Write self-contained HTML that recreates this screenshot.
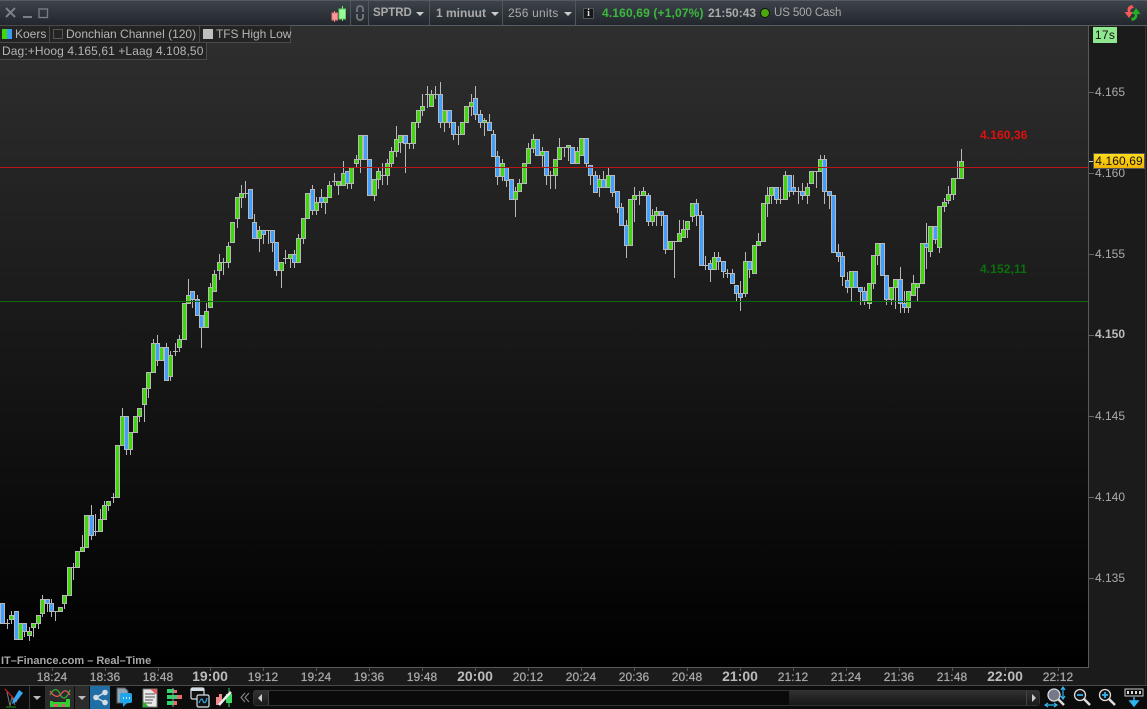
<!DOCTYPE html>
<html><head><meta charset="utf-8"><title>SPTRD</title>
<style>
html,body{margin:0;padding:0;background:#000}
#r{position:relative;width:1147px;height:709px;overflow:hidden;background:#1b1b1b;font-family:"Liberation Sans",sans-serif;color:#aaa;font-size:12px}
#r div,#r span,#r svg{position:absolute}
.t{white-space:nowrap;line-height:14px}
.l{background:#242424;border:1px solid #4a4a4a;box-sizing:border-box;height:18px}
.s{width:1px;top:1px;height:24px;background:#50565c}
.a{width:0;height:0;border-left:4px solid transparent;border-right:4px solid transparent;border-top:4px solid #ccc}
.y{left:1095px;color:#aaa;font-size:12px}
.k{left:1089px;width:5px;height:1px;background:#666}
.x{top:670px;width:60px;text-align:center;color:#aaa;font-size:12px;letter-spacing:.1px;text-shadow:0 0 .6px #aaa}
.m{top:668px;width:1px;height:3px;background:#555}
.b{font-size:14px!important;font-weight:bold;color:#bbb!important;top:669px!important;letter-spacing:0!important;text-shadow:none}
</style></head><body><div id="r">

<!-- top bar -->
<div style="left:0;top:0;width:1147px;height:25px;background:linear-gradient(#3d434a,#22272d);border-top:1px solid #565b61;box-sizing:border-box"></div>
<div style="left:0;top:25px;width:1147px;height:1px;background:#5a5e62"></div>
<svg style="left:0;top:0" width="60" height="25"><path d="M6 8L15 17M15 8L6 17" stroke="#7b8086" stroke-width="2"/><rect x="23" y="16" width="9" height="2" fill="#7b8086"/><rect x="39" y="9" width="8.500" height="8.500" fill="none" stroke="#7b8086" stroke-width="1.300"/></svg>
<svg style="left:328px;top:3px" width="22" height="20"><path d="M6.500 8V19" stroke="#f88"/><rect x="4" y="10" width="5.500" height="7" fill="#f99" stroke="#d77"/><path d="M14.500 3V18" stroke="#6f6"/><rect x="11" y="6" width="6.500" height="10" fill="#9f9" stroke="#6c6"/></svg>
<div class="s" style="left:350px"></div>
<svg style="left:354px;top:4px" width="12" height="18"><path d="M2 8V5a4 4 0 0 1 8 0V8h-2V5a2 2 0 0 0-4 0V8zM2 10v3a4 4 0 0 0 8 0V10h-2v3a2 2 0 0 1-4 0V10z" fill="#6e7378"/></svg>
<div class="s" style="left:368px"></div>
<span class="t" style="left:373px;top:6px;font-weight:bold;font-size:11.500px;letter-spacing:-.05px">SPTRD</span>
<div class="a" style="left:416px;top:12px"></div>
<div class="s" style="left:429px"></div>
<span class="t" style="left:436px;top:6px;font-weight:bold">1 minuut</span>
<div class="a" style="left:491px;top:12px"></div>
<div class="s" style="left:502px"></div>
<span class="t" style="left:508px;top:6px;letter-spacing:.2px">256 units</span>
<div class="a" style="left:564px;top:12px"></div>
<div class="s" style="left:575px"></div>
<div style="left:583px;top:8px;width:11px;height:11px;background:#15181b;border:1px solid #555;box-sizing:border-box;color:#ddd;font:bold 10px/9px 'Liberation Serif',serif;text-align:center">i</div>
<span class="t" style="left:602px;top:6px;font-weight:bold;color:#3cb83c;letter-spacing:.15px">4.160,69 (+1,07%)</span>
<span class="t" style="left:708px;top:6px;font-weight:bold">21:50:43</span>
<div style="left:760px;top:8px;width:10px;height:10px;border-radius:50%;background:#4aa80c;border:1px solid #111;box-sizing:border-box"></div>
<span class="t" style="left:774px;top:6px;font-size:11.500px;letter-spacing:-.1px">US 500 Cash</span>
<svg style="left:1122px;top:3px" width="22" height="20"><path d="M10 2C5 3 5 7 6 9H2.500L7 15L11 9H8.500C8 7 9 5 12 5z" fill="#f05a5a"/><path d="M10 18C15 17 16 13 15 11H18.500L14 5L10 11H12.500C13 13 12 15 9 15z" fill="#1fb31f"/></svg>

<!-- chart bg -->
<div style="left:0;top:26px;width:1088px;height:641px;background:linear-gradient(#2f2f2f,#000)"></div>
<svg id="c" style="left:0;top:26px" width="1088" height="641" viewBox="0 26 1088 641"></svg>
<div style="left:0;top:167px;width:1088px;height:1px;background:#bb1515"></div>
<div style="left:0;top:301px;width:1088px;height:1px;background:#0e6a0e"></div>

<!-- legend -->
<div class="l" style="left:-1px;top:25px;width:51px"></div>
<div style="left:2px;top:29px;width:5px;height:10px;background:#3fd80a"></div><div style="left:7px;top:29px;width:5px;height:10px;background:#3a9cf5"></div>
<span class="t" style="left:15px;top:27px;color:#b5b5b5">Koers</span>
<div class="l" style="left:49px;top:25px;width:151px"></div>
<div style="left:53px;top:29px;width:10px;height:10px;border:1px solid #555;box-sizing:border-box"></div>
<span class="t" style="left:66px;top:27px;color:#b5b5b5">Donchian Channel (120)</span>
<div class="l" style="left:199px;top:25px;width:92px"></div>
<div style="left:203px;top:29px;width:10px;height:10px;background:#c0c0c0"></div>
<span class="t" style="left:216px;top:27px;letter-spacing:-.05px;color:#b5b5b5">TFS High Low</span>
<div class="l" style="left:-1px;top:42px;width:208px"></div>
<span class="t" style="left:2px;top:44px;letter-spacing:.1px;color:#b5b5b5">Dag:+Hoog 4.165,61 +Laag 4.108,50</span>

<span class="t" style="left:980px;top:128px;color:#e01010;font-weight:bold;letter-spacing:.1px">4.160,36</span>
<span class="t" style="left:980px;top:262px;color:#0b700b;font-weight:bold;letter-spacing:.1px">4.152,11</span>
<span class="t" style="left:1px;top:654px;font-weight:bold;font-size:11px;color:#a8a8a8">IT–Finance.com – Real–Time</span>

<!-- right axis -->
<div style="left:1088px;top:26px;width:1px;height:642px;background:#5a5a5a"></div>
<div style="left:1145px;top:26px;width:1px;height:659px;background:#333"></div>
<div style="left:1093px;top:27px;width:24px;height:16px;background:#8fe88f;color:#111;font-size:12px;line-height:16px;text-align:center;letter-spacing:.3px">17s</div>
<div class="k" style="top:92px"></div><span class="t y" style="top:85px">4.165</span>
<div class="k" style="top:173px"></div><span class="t y" style="top:166px">4.160</span>
<div class="k" style="top:254px"></div><span class="t y" style="top:247px">4.155</span>
<div class="k" style="top:335px"></div><span class="t y" style="top:327px;font-weight:bold;color:#bbb">4.150</span>
<div class="k" style="top:416px"></div><span class="t y" style="top:409px">4.145</span>
<div class="k" style="top:497px"></div><span class="t y" style="top:490px">4.140</span>
<div class="k" style="top:578px"></div><span class="t y" style="top:571px">4.135</span>
<div style="left:1089px;top:161px;width:5px;height:1px;background:#ccc"></div>
<div style="left:1093px;top:153px;width:52px;height:16px;background:linear-gradient(#ffdc1e,#f0b400);border:1px solid #555;box-sizing:border-box;color:#111;line-height:14px;text-align:center;letter-spacing:.1px">4.160,69</div>

<!-- time axis -->
<div style="left:0;top:667px;width:1089px;height:1px;background:#5a5a5a"></div>
<div id="tm">
<span class="t x" style="left:22px">18:24</span><span class="t x" style="left:75px">18:36</span><span class="t x" style="left:128px">18:48</span><span class="t x b" style="left:180px">19:00</span><span class="t x" style="left:233px">19:12</span><span class="t x" style="left:286px">19:24</span><span class="t x" style="left:339px">19:36</span><span class="t x" style="left:392px">19:48</span><span class="t x b" style="left:445px">20:00</span><span class="t x" style="left:498px">20:12</span><span class="t x" style="left:551px">20:24</span><span class="t x" style="left:604px">20:36</span><span class="t x" style="left:657px">20:48</span><span class="t x b" style="left:710px">21:00</span><span class="t x" style="left:763px">21:12</span><span class="t x" style="left:816px">21:24</span><span class="t x" style="left:869px">21:36</span><span class="t x" style="left:922px">21:48</span><span class="t x b" style="left:975px">22:00</span><span class="t x" style="left:1028px">22:12</span>
<div class="m" style="left:52px"></div><div class="m" style="left:105px"></div><div class="m" style="left:158px"></div><div class="m" style="left:210px"></div><div class="m" style="left:263px"></div><div class="m" style="left:316px"></div><div class="m" style="left:369px"></div><div class="m" style="left:422px"></div><div class="m" style="left:475px"></div><div class="m" style="left:528px"></div><div class="m" style="left:581px"></div><div class="m" style="left:634px"></div><div class="m" style="left:687px"></div><div class="m" style="left:740px"></div><div class="m" style="left:793px"></div><div class="m" style="left:846px"></div><div class="m" style="left:899px"></div><div class="m" style="left:952px"></div><div class="m" style="left:1005px"></div><div class="m" style="left:1058px"></div>
</div>

<!-- bottom toolbar -->
<div style="left:0;top:685px;width:1147px;height:24px;background:#0c0c0c;border-top:1px solid #4a4a4a;box-sizing:border-box"></div>
<div style="left:29px;top:686px;width:1px;height:23px;background:#3a3a3a"></div>
<div class="a" style="left:33px;top:696px;border-top-color:#bbb"></div>
<div style="left:45px;top:686px;width:29px;height:23px;background:#2c2c2c"></div>
<div style="left:75px;top:686px;width:14px;height:23px;background:#2c2c2c"></div>
<div class="a" style="left:78px;top:696px;border-top-color:#bbb"></div>
<div style="left:90px;top:686px;width:20px;height:23px;background:#1f6ea6"></div>
<svg style="left:0;top:686px" width="250" height="23">
<path d="M7 6L10 20M10 20L12 11L15 19" stroke="#777" fill="none"/><path d="M5 3L17 16" stroke="#e02020" stroke-width="1.100"/><path d="M19 4L23 7L16 16L12 18L13 14z" fill="#3aa8f0"/><path d="M6 21H16" stroke="#1d9a1d"/>
<path d="M50 9C54 1 58 3 60 8S66 15 70 4" stroke="#2fae2f" stroke-width="1.300" fill="none"/><path d="M50 5C54 11 58 12 61 8S66 3 70 9" stroke="#e05a5a" stroke-width="1.300" fill="none"/><path d="M50 16h20v5H50z" fill="#2fd02f"/><path d="M54 18h4v3h-4zM62 18h3v3h-3z" fill="#e05a6a"/><path d="M50 15h3v2h-3zM66 13h4v3h-4z" fill="#2fd02f"/>
<circle cx="96" cy="11.500" r="2.800" fill="#d5dde3"/><circle cx="105" cy="6.500" r="2.800" fill="#d5dde3"/><circle cx="105" cy="16.500" r="2.800" fill="#d5dde3"/><path d="M96 11.500L105 6.500M96 11.500L105 16.500" stroke="#d5dde3" stroke-width="1.300"/>
<path d="M117 2h8l3 3v12h-11z" fill="#93a5b5" stroke="#556"/><rect x="120" y="7" width="12" height="10" rx="2" fill="#1fa5ea"/><path d="M123 17v4l4-4z" fill="#1fa5ea"/><path d="M123 12h1M126 12h1M129 12h1" stroke="#fff" stroke-width="1.500"/>
<path d="M143 3h14v18h-14z" fill="#e8e8e8" stroke="#777"/><path d="M145 8h10M145 11h10M145 14h8M145 17h7" stroke="#555"/><path d="M150 3h7v6z" fill="#e06060"/><path d="M143 21v-6l6 6z" fill="#28b028"/>
<path d="M167 3h7v4h-7zM167 9h10v4h-10zM167 15h7v4h-7z" fill="#2fd56a"/><path d="M174 4h3v3h-3zM177 9h5v4h-5zM174 15h3v4h-3z" fill="#e86a6a"/><path d="M173 2v19" stroke="#999"/>
<rect x="191" y="2" width="13" height="11" rx="1.500" fill="#111" stroke="#d5dde3" stroke-width="1.200"/><rect x="191" y="2" width="13" height="3" fill="#d5dde3"/><rect x="197" y="9" width="12" height="12" rx="1.500" fill="#111" stroke="#d5dde3" stroke-width="1.200"/><path d="M199 17c2-5 3-5 4-2s3 2 4-3" stroke="#2fa5ea" fill="none" stroke-width="1.200"/>
<path d="M216 11h4v8h-4zM219 8h3v9h-3z" fill="#f08a8a"/><path d="M226 8h6v9h-6z" fill="#3fd860"/><path d="M229 2v19" stroke="#3fd860"/><path d="M219 19L227 10L231 6" stroke="#eee" stroke-width="2.500" fill="none"/>
<path d="M245 7L241 11.500L245 16M249 7L245 11.500L249 16" stroke="#888" fill="none" stroke-width="1.100"/>
</svg>

<!-- scrollbar -->
<div style="left:253px;top:690px;width:787px;height:16px;background:#0a0a0a;border:1px solid #333;border-radius:3px;box-sizing:border-box"></div>
<div style="left:254px;top:691px;width:14px;height:14px;background:linear-gradient(#333,#1a1a1a)"></div>
<div style="left:258px;top:694px;width:0;height:0;border-top:4px solid transparent;border-bottom:4px solid transparent;border-right:4px solid #ccc"></div>
<div style="left:268px;top:691px;width:1px;height:14px;background:#444"></div>
<div style="left:789px;top:691px;width:237px;height:14px;background:linear-gradient(#303030,#181818)"></div>
<div style="left:1026px;top:691px;width:13px;height:14px;background:linear-gradient(#333,#1a1a1a);border-left:1px solid #444;box-sizing:border-box"></div>
<div style="left:1032px;top:694px;width:0;height:0;border-top:4px solid transparent;border-bottom:4px solid transparent;border-left:4px solid #ccc"></div>

<svg style="left:1044px;top:686px" width="103" height="23">
<circle cx="10" cy="9" r="6" fill="#778" stroke="#cdd" stroke-width="1.300"/><path d="M14 13L20 19" stroke="#ddd" stroke-width="2.500"/><path d="M19 2V12M17 4l2-3 2 3M17 10l2 3 2-3M2 19H12M4 17l-3 2 3 2M10 17l3 2-3 2" stroke="#2fb5f0" stroke-width="1.200" fill="none"/>
<circle cx="36" cy="9" r="5.500" fill="#111" stroke="#ddd" stroke-width="1.300"/><path d="M33 9H39" stroke="#2fb5f0" stroke-width="1.800"/><path d="M40 13L46 19" stroke="#ddd" stroke-width="2.500"/>
<circle cx="61" cy="9" r="5.500" fill="#111" stroke="#ddd" stroke-width="1.300"/><path d="M58 9H64M61 6V12" stroke="#2fb5f0" stroke-width="1.800"/><path d="M65 13L71 19" stroke="#ddd" stroke-width="2.500"/>
<rect x="81" y="3" width="18" height="7" fill="none" stroke="#ccc"/><path d="M83 5h2v3h-2zM87 5h2v3h-2zM91 5h2v3h-2zM95 5h2v3h-2z" fill="#ddd"/><path d="M90 11V17M86 15l4 5 4-5z" stroke="#2fb5f0" fill="#2fb5f0" stroke-width="1.500"/>
</svg>

<script>
var d="b603,623;d623,623,619,628;g615,619,611,623;b611,639;g623,639;b623,631,623,636;g631,635,627,640;g623,627,623,636;g615,623,615,628;g599,613,595,616;b599,603,599,611;b603,611,599,616;d611,611,611,620;g607,611;g595,603,595,608;g567,595;d567,567,563,579;g551,567;g547,551,535,551;g515,547;b515,535,505,539;d531,531,514,535;g519,531,509,531;g505,519,501,519;g501,505,501,510;d497,497,493,502;g445,497;g416,445,408,445;b416,449,416,454;g432,449,432,454;g416,432;g408,416,408,421;g388,404,388,421;g372,388,372,397;g343,372,339,372;b343,360,335,365;g347,360;b347,380,343,380;g355,376,351,380;d351,351,343,355;g339,347,335,351;g303,339;g295,303,279,303;b291,299,291,307;b299,315,295,315;b315,327,315,347;g311,327,303,327;g287,307,283,307;g274,291,270,291;g262,270,254,279;d262,262,258,274;g246,262,242,267;g222,242;g197,218,197,227;g193,197,185,207;d193,193,181,197;b189,218;b222,238,214,238;g230,238,226,251;b230,234,230,243;d230,230,230,243;b230,242,230,251;b242,270,242,275;g262,270,262,287;d258,258,250,263;g254,258,254,267;b254,262,250,267;g238,262,234,262;g218,238,218,243;g193,218;b189,210,185,214;g202,210,197,214;b197,202,189,207;g197,202,197,213;g185,197,181,197;d181,181,173,185;g181,185,181,194;g173,185,161,185;b171,183,171,188;g167,183,167,188;g159,163,155,167;g135,159,135,172;b135,159;b159,195;g179,195,179,200;g171,179,168,188;d175,175,163,184;g163,175,159,184;g151,163,147,167;g139,151,126,156;g135,142,135,152;b135,143,135,172;d143,143,143,148;g122,143,122,148;g110,122,110,127;g106,110,94,115;d94,94,86,107;g94,106,90,106;d94,94,86,98;b94,122,82,127;g110,122,110,131;b110,122,110,127;b122,134,122,139;d134,134,126,144;g122,134;g106,122;g102,106,94,115;b98,114,86,119;b114,122,110,127;g120,122,118,135;b122,130,114,130;b134,156,130,156;b156,176,151,184;g163,176,159,180;b167,180,167,186;b179,199;g191,199,187,216;g183,191,179,191;g163,183;g148,163,143,163;g139,148,134,152;b139,155;g151,155,147,167;b151,175,151,184;d175,175,171,188;g159,175,159,188;g147,159,138,159;d147,147,147,156;g145,147,145,160;b147,163;g151,163,147,163;g138,155;b138,163,138,167;b165,175,165,184;b175,192,171,192;g179,187,175,196;b179,187,171,187;g175,187,168,187;b175,192,175,196;b191,207,191,212;b207,225,203,225;b225,245,220,257;g199,245;g195,199,187,221;d195,195,191,204;g191,195,187,195;b195,221,193,225;g215,221,209,225;g211,215,207,225;b211,215,211,225;b215,249,215,253;g241,249;d241,241,241,277;g233,241,220,241;g229,237,220,237;g221,229,221,237;g203,216,203,221;b203,215,199,225;b215,265,211,265;d265,265,256,269;b263,269,260,281;g257,269,252,269;b257,261,252,269;b261,271,261,277;d273,273,269,277;b273,283,269,283;b285,293,285,301;b293,297,281,310;g261,293,252,296;b261,269,261,277;g245,273;g241,245,233,245;g203,241;g195,203,187,216;g187,195,187,203;b187,199,187,203;d199,199,187,203;g175,199,171,199;b175,191,175,196;b187,191,175,194;d191,191,187,203;b191,195,183,199;g187,195,183,203;g171,183;d171,171,171,187;g159,171,155,171;b159,191,155,203;b191,195,191,208;b195,252;b252,256,244,261;b256,276,252,285;b280,287,272,292;g271,287,271,300;b271,287;b287,291,287,304;b291,300,287,304;g283,303,283,308;g255,283,255,288;g243,255,243,264;b243,275;b275,299,275,304;g287,299,287,304;g279,287,279,308;b279,303,267,312;b303,307,291,312;g291,307,291,312;g283,295,275,295;g283,287,283,300;g243,283;b243,247,223,268;g226,251,226,256;b226,239,226,243;g206,247,206,252;g202,206,198,211;g194,200,186,203;g178,194,178,199;d178,178,161,178;g161,178,149,178".split(";");
var o="";
d.forEach(function(e,i){
 var c=e[0],p=e.slice(1).split(",").map(Number),t=p[0],b=p[1],h=p.length>2?p[2]:t,l=p.length>3?p[3]:b;
 var x=Math.round(2.3+4.42*i);
 o+='<rect x="'+x+'" y="'+h+'" width="1" height="'+(l-h+1)+'" fill="#b8b8b8"/>';
 if(c=="d"){o+='<rect x="'+(x-2)+'" y="'+t+'" width="5" height="1" fill="#b8b8b8"/>';return;}
 var f=c=="g"?"#3fd80a":"#3fa0ff";
 o+='<rect x="'+(x-2)+'" y="'+t+'" width="5" height="'+(b-t+1)+'" fill="#b8b8b8"/>';
 o+='<rect x="'+(x-1)+'" y="'+(t+1)+'" width="3" height="'+Math.max(b-t-1,1)+'" fill="'+f+'"/>';
});
document.getElementById("c").innerHTML=o;
</script>
</div></body></html>
